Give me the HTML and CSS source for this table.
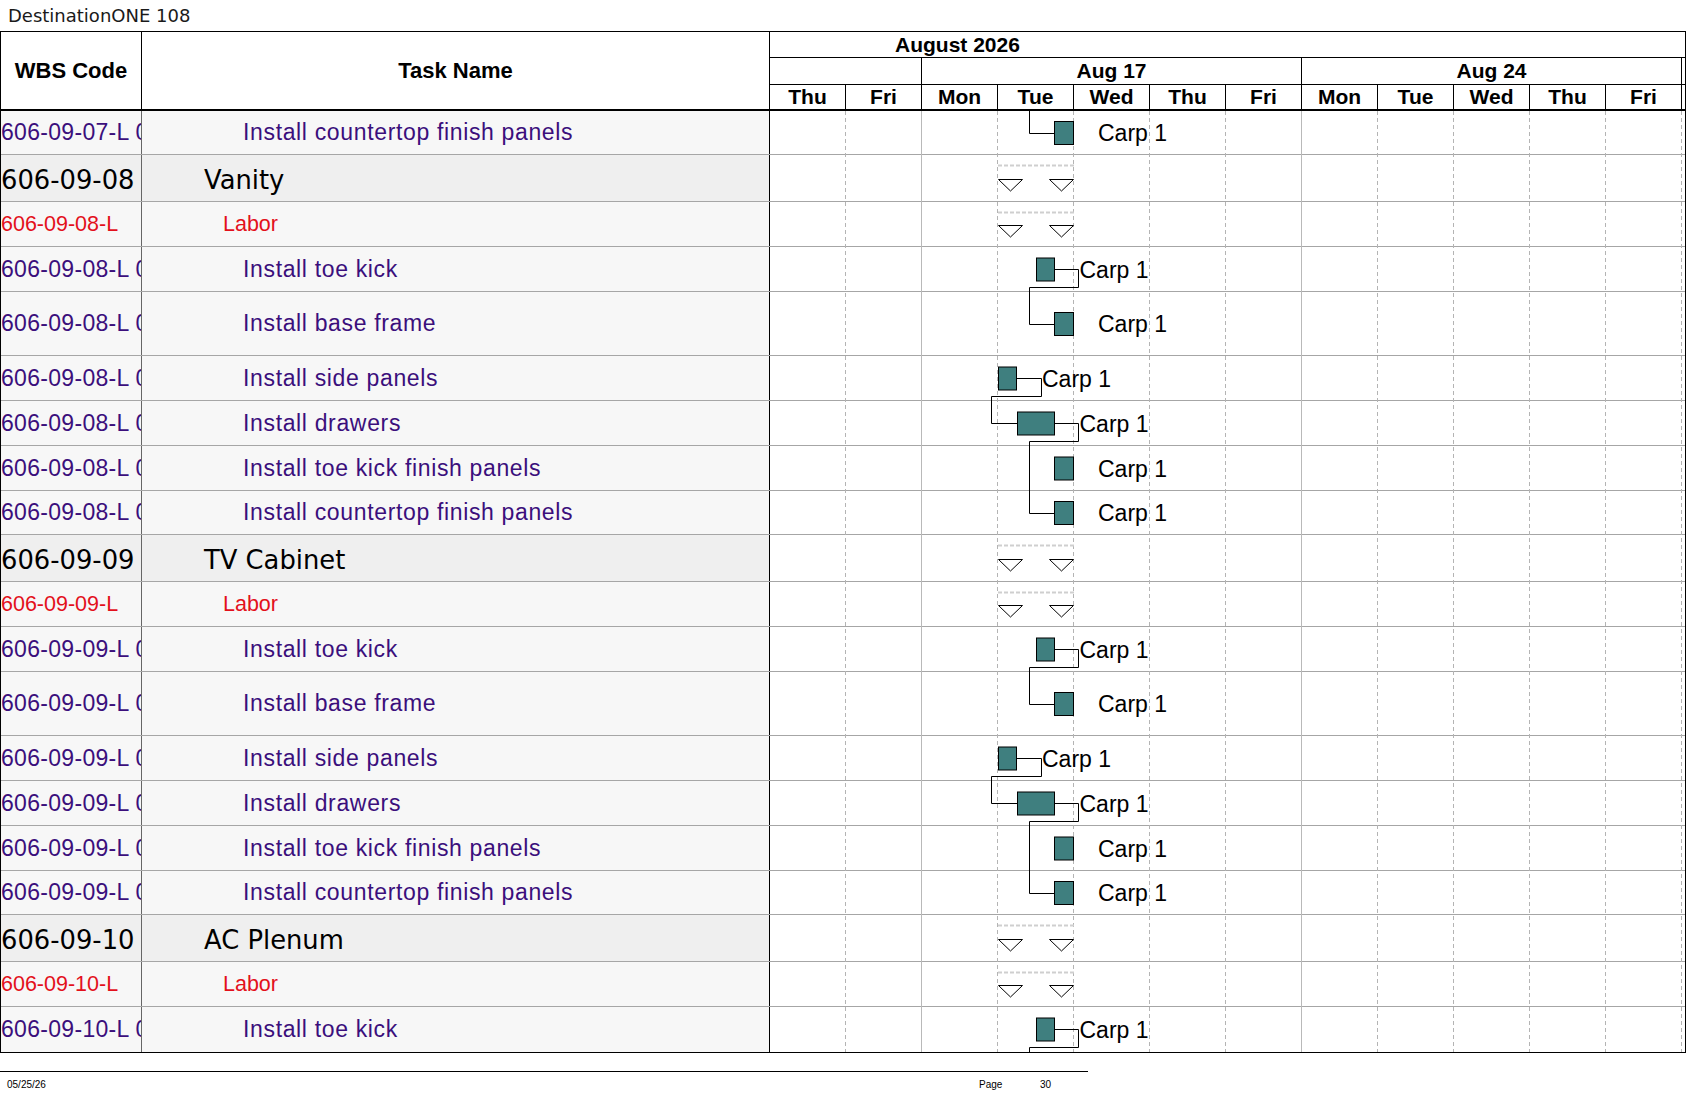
FILE: index.html
```html
<!DOCTYPE html>
<html lang="en">
<head>
<meta charset="utf-8">
<title>DestinationONE 108</title>
<link rel="stylesheet" href="styles.css">
</head>
<body>
<div class="title">DestinationONE 108</div>
<div class="sheet">
  <div class="head">
    <div class="hcell wbs-h">WBS Code</div>
    <div class="hcell task-h">Task Name</div>
    <div class="timescale">
      <div class="month">August 2026</div>
      <div class="weeks">
        <div class="wk wk-pre"></div>
        <div class="wk wk-main">Aug 17</div>
        <div class="wk wk-main">Aug 24</div>
        <div class="wk wk-post"></div>
      </div>
      <div class="days">
        <div class="day">Thu</div><div class="day">Fri</div><div class="day">Mon</div><div class="day">Tue</div><div class="day">Wed</div><div class="day">Thu</div><div class="day">Fri</div><div class="day">Mon</div><div class="day">Tue</div><div class="day">Wed</div><div class="day">Thu</div><div class="day">Fri</div><div class="day day-post"></div>
      </div>
    </div>
  </div>
  <div class="body">
    <svg class="chart" width="915" height="941" viewBox="0 0 915 941">
      <g class="vgrid">
        <line class="dash" x1="75.5" y1="0" x2="75.5" y2="941"/>
        <line class="solid" x1="151.5" y1="0" x2="151.5" y2="941"/>
        <line class="dash" x1="227.5" y1="0" x2="227.5" y2="941"/>
        <line class="dash" x1="303.5" y1="0" x2="303.5" y2="941"/>
        <line class="dash" x1="379.5" y1="0" x2="379.5" y2="941"/>
        <line class="dash" x1="455.5" y1="0" x2="455.5" y2="941"/>
        <line class="solid" x1="531.5" y1="0" x2="531.5" y2="941"/>
        <line class="dash" x1="607.5" y1="0" x2="607.5" y2="941"/>
        <line class="dash" x1="683.5" y1="0" x2="683.5" y2="941"/>
        <line class="dash" x1="759.5" y1="0" x2="759.5" y2="941"/>
        <line class="dash" x1="835.5" y1="0" x2="835.5" y2="941"/>
        <line class="dash" x1="911.5" y1="0" x2="911.5" y2="941"/>
      </g>
      <!-- row 1 -->
      <path class="link" d="M259.5 0 V22.5 H284"/>
      <rect class="bar" x="284.5" y="10.5" width="19" height="23"/>
      <text class="lbl" x="328" y="30">Carp 1</text>

      <!-- Vanity -->
      <g transform="translate(0,44)">
        <line class="sum" x1="228" y1="10.5" x2="304" y2="10.5"/>
        <polygon class="tri" points="228.5,24.5 252.5,24.5 240.5,36"/>
        <polygon class="tri" points="279.5,24.5 303.5,24.5 291.5,36"/>
        <line class="sum" x1="228" y1="57.5" x2="304" y2="57.5"/>
        <polygon class="tri" points="228.5,70.5 252.5,70.5 240.5,82"/>
        <polygon class="tri" points="279.5,70.5 303.5,70.5 291.5,82"/>
        <rect class="bar" x="266.5" y="103" width="18" height="23"/>
        <path class="link" d="M285 114.5 H308.5 V132.5 H259.5 V169.5 H284"/>
        <text class="lbl" x="309.5" y="122.5">Carp 1</text>
        <rect class="bar" x="284.5" y="157.5" width="19" height="23"/>
        <text class="lbl" x="328" y="177">Carp 1</text>
        <rect class="bar" x="228.5" y="212" width="18" height="23"/>
        <path class="link" d="M247 223.5 H271.5 V241.5 H221.5 V268.5 H247"/>
        <text class="lbl" x="272" y="231.5">Carp 1</text>
        <rect class="bar" x="247.5" y="257" width="37" height="23"/>
        <path class="link" d="M285 268.5 H308.5 V286.5 H259.5 V358.5 H284"/>
        <text class="lbl" x="309.5" y="276.5">Carp 1</text>
        <rect class="bar" x="284.5" y="302" width="19" height="23"/>
        <text class="lbl" x="328" y="321.5">Carp 1</text>
        <rect class="bar" x="284.5" y="346.5" width="19" height="23"/>
        <text class="lbl" x="328" y="366">Carp 1</text>
      </g>

      <!-- TV Cabinet -->
      <g transform="translate(0,424)">
        <line class="sum" x1="228" y1="10.5" x2="304" y2="10.5"/>
        <polygon class="tri" points="228.5,24.5 252.5,24.5 240.5,36"/>
        <polygon class="tri" points="279.5,24.5 303.5,24.5 291.5,36"/>
        <line class="sum" x1="228" y1="57.5" x2="304" y2="57.5"/>
        <polygon class="tri" points="228.5,70.5 252.5,70.5 240.5,82"/>
        <polygon class="tri" points="279.5,70.5 303.5,70.5 291.5,82"/>
        <rect class="bar" x="266.5" y="103" width="18" height="23"/>
        <path class="link" d="M285 114.5 H308.5 V132.5 H259.5 V169.5 H284"/>
        <text class="lbl" x="309.5" y="122.5">Carp 1</text>
        <rect class="bar" x="284.5" y="157.5" width="19" height="23"/>
        <text class="lbl" x="328" y="177">Carp 1</text>
        <rect class="bar" x="228.5" y="212" width="18" height="23"/>
        <path class="link" d="M247 223.5 H271.5 V241.5 H221.5 V268.5 H247"/>
        <text class="lbl" x="272" y="231.5">Carp 1</text>
        <rect class="bar" x="247.5" y="257" width="37" height="23"/>
        <path class="link" d="M285 268.5 H308.5 V286.5 H259.5 V358.5 H284"/>
        <text class="lbl" x="309.5" y="276.5">Carp 1</text>
        <rect class="bar" x="284.5" y="302" width="19" height="23"/>
        <text class="lbl" x="328" y="321.5">Carp 1</text>
        <rect class="bar" x="284.5" y="346.5" width="19" height="23"/>
        <text class="lbl" x="328" y="366">Carp 1</text>
      </g>

      <!-- AC Plenum -->
      <g transform="translate(0,804)">
        <line class="sum" x1="228" y1="10.5" x2="304" y2="10.5"/>
        <polygon class="tri" points="228.5,24.5 252.5,24.5 240.5,36"/>
        <polygon class="tri" points="279.5,24.5 303.5,24.5 291.5,36"/>
        <line class="sum" x1="228" y1="57.5" x2="304" y2="57.5"/>
        <polygon class="tri" points="228.5,70.5 252.5,70.5 240.5,82"/>
        <polygon class="tri" points="279.5,70.5 303.5,70.5 291.5,82"/>
        <rect class="bar" x="266.5" y="103" width="18" height="23"/>
        <path class="link" d="M285 114.5 H308.5 V132.5 H259.5 V137"/>
        <text class="lbl" x="309.5" y="122.5">Carp 1</text>
      </g>
    </svg>

    <div class="row item short"><div class="wbs">606-09-07-L 005</div><div class="task">Install countertop finish panels</div><div class="gantt"></div></div>

    <div class="row group"><div class="wbs">606-09-08</div><div class="task">Vanity</div><div class="gantt"></div></div>
    <div class="row labor"><div class="wbs">606-09-08-L</div><div class="task">Labor</div><div class="gantt"></div></div>
    <div class="row item"><div class="wbs">606-09-08-L 001</div><div class="task">Install toe kick</div><div class="gantt"></div></div>
    <div class="row item tall"><div class="wbs">606-09-08-L 002</div><div class="task">Install base frame</div><div class="gantt"></div></div>
    <div class="row item"><div class="wbs">606-09-08-L 003</div><div class="task">Install side panels</div><div class="gantt"></div></div>
    <div class="row item"><div class="wbs">606-09-08-L 004</div><div class="task">Install drawers</div><div class="gantt"></div></div>
    <div class="row item"><div class="wbs">606-09-08-L 005</div><div class="task">Install toe kick finish panels</div><div class="gantt"></div></div>
    <div class="row item short"><div class="wbs">606-09-08-L 006</div><div class="task">Install countertop finish panels</div><div class="gantt"></div></div>

    <div class="row group"><div class="wbs">606-09-09</div><div class="task">TV Cabinet</div><div class="gantt"></div></div>
    <div class="row labor"><div class="wbs">606-09-09-L</div><div class="task">Labor</div><div class="gantt"></div></div>
    <div class="row item"><div class="wbs">606-09-09-L 001</div><div class="task">Install toe kick</div><div class="gantt"></div></div>
    <div class="row item tall"><div class="wbs">606-09-09-L 002</div><div class="task">Install base frame</div><div class="gantt"></div></div>
    <div class="row item"><div class="wbs">606-09-09-L 003</div><div class="task">Install side panels</div><div class="gantt"></div></div>
    <div class="row item"><div class="wbs">606-09-09-L 004</div><div class="task">Install drawers</div><div class="gantt"></div></div>
    <div class="row item"><div class="wbs">606-09-09-L 005</div><div class="task">Install toe kick finish panels</div><div class="gantt"></div></div>
    <div class="row item short"><div class="wbs">606-09-09-L 006</div><div class="task">Install countertop finish panels</div><div class="gantt"></div></div>

    <div class="row group"><div class="wbs">606-09-10</div><div class="task">AC Plenum</div><div class="gantt"></div></div>
    <div class="row labor"><div class="wbs">606-09-10-L</div><div class="task">Labor</div><div class="gantt"></div></div>
    <div class="row item"><div class="wbs">606-09-10-L 001</div><div class="task">Install toe kick</div><div class="gantt"></div></div>
  </div>
</div>
<div class="footer">
  <div class="f-date">05/25/26</div>
  <div class="f-page">Page</div>
  <div class="f-num">30</div>
</div>
</body>
</html>
```

FILE: styles.css
```css
* {
  box-sizing: border-box;
}

body {
  margin: 0;
  background: #ffffff;
  color: #000000;
  font-family: "Liberation Sans", Arial, sans-serif;
}

.title {
  height: 31px;
  line-height: 31px;
  padding-left: 8px;
  font-family: "DejaVu Sans", sans-serif;
  font-size: 18px;
  font-weight: normal;
  color: #1a1a1a;
}

.sheet {
  width: 1686px;
  border: 1px solid #000000;
}

.head {
  display: grid;
  grid-template-columns: 141px 628px 915px;
  height: 79px;
  border-bottom: 2px solid #000000;
}

.hcell {
  display: flex;
  align-items: center;
  justify-content: center;
  font-weight: bold;
  font-size: 22px;
  border-right: 1px solid #000000;
}

.timescale {
  display: flex;
  flex-direction: column;
  font-weight: bold;
  font-size: 21px;
}

.month {
  height: 26px;
  line-height: 25px;
  padding-left: 125px;
  border-bottom: 1px solid #000000;
}

.weeks {
  display: flex;
  height: 27px;
  border-bottom: 1px solid #000000;
}

.wk {
  border-right: 1px solid #000000;
  text-align: center;
  line-height: 26px;
}

.wk-pre {
  width: 152px;
}

.wk-main {
  width: 380px;
}

.wk-post {
  flex: 1;
  border-right: none;
}

.days {
  display: flex;
  height: 24px;
}

.day {
  width: 76px;
  border-right: 1px solid #000000;
  text-align: center;
  line-height: 24px;
}

.day-post {
  flex: 1;
  width: auto;
  border-right: none;
}

.body {
  position: relative;
}

.row {
  display: grid;
  grid-template-columns: 141px 628px 915px;
  height: 45px;
  border-bottom: 1px solid #a6a6a6;
}

.row.short {
  height: 44px;
}

.row.group {
  height: 47px;
}

.row.tall {
  height: 64px;
}

.row:last-child {
  border-bottom: none;
}

.wbs {
  display: flex;
  align-items: center;
  padding-left: 0;
  overflow: hidden;
  white-space: nowrap;
  background: #f7f7f7;
  border-right: 1px solid #666666;
  font-size: 23px;
}

.task {
  display: flex;
  align-items: center;
  overflow: hidden;
  white-space: nowrap;
  background: #f7f7f7;
  border-right: 1px solid #000000;
}

.gantt {
  background: #ffffff;
}

.item .wbs,
.item .task {
  color: #3b0f7c;
}

.item .wbs {
  letter-spacing: 0.3px;
}

.item .task {
  padding-left: 101px;
  font-size: 23px;
  letter-spacing: 0.65px;
}

.labor .wbs,
.labor .task {
  color: #e3101b;
  font-size: 21.5px;
}

.labor .task {
  padding-left: 81px;
}

.group .wbs,
.group .task {
  background: #efefef;
  color: #000000;
  font-family: "DejaVu Sans", sans-serif;
  font-size: 25.8px;
}

.group .wbs {
  padding-top: 4px;
}

.group .task {
  padding-left: 62px;
  padding-top: 4px;
}

.chart {
  position: absolute;
  left: 769px;
  top: 0;
  z-index: 1;
}

.chart .dash {
  stroke: #b4b4b4;
  stroke-width: 1;
  stroke-dasharray: 4 3;
}

.chart .solid {
  stroke: #b9b9b9;
  stroke-width: 1;
}

.chart .bar {
  fill: #3f7f7f;
  stroke: #000000;
  stroke-width: 1;
}

.chart .link {
  fill: none;
  stroke: #000000;
  stroke-width: 1;
}

.chart .sum {
  stroke: #cfcfcf;
  stroke-width: 2;
  stroke-dasharray: 4 2;
}

.chart .tri {
  fill: #ffffff;
  stroke: #000000;
  stroke-width: 1;
}

.chart .lbl {
  font-family: "Liberation Sans", Arial, sans-serif;
  font-size: 23px;
  fill: #000000;
}

.footer {
  display: flex;
  width: 1088px;
  margin-top: 18px;
  padding-top: 8px;
  border-top: 1px solid #000000;
  font-family: "Liberation Sans", Arial, sans-serif;
  font-size: 10px;
  line-height: 10px;
  color: #000000;
}

.f-date {
  width: 979px;
  padding-left: 7px;
}

.f-page {
  width: 61px;
}
```
